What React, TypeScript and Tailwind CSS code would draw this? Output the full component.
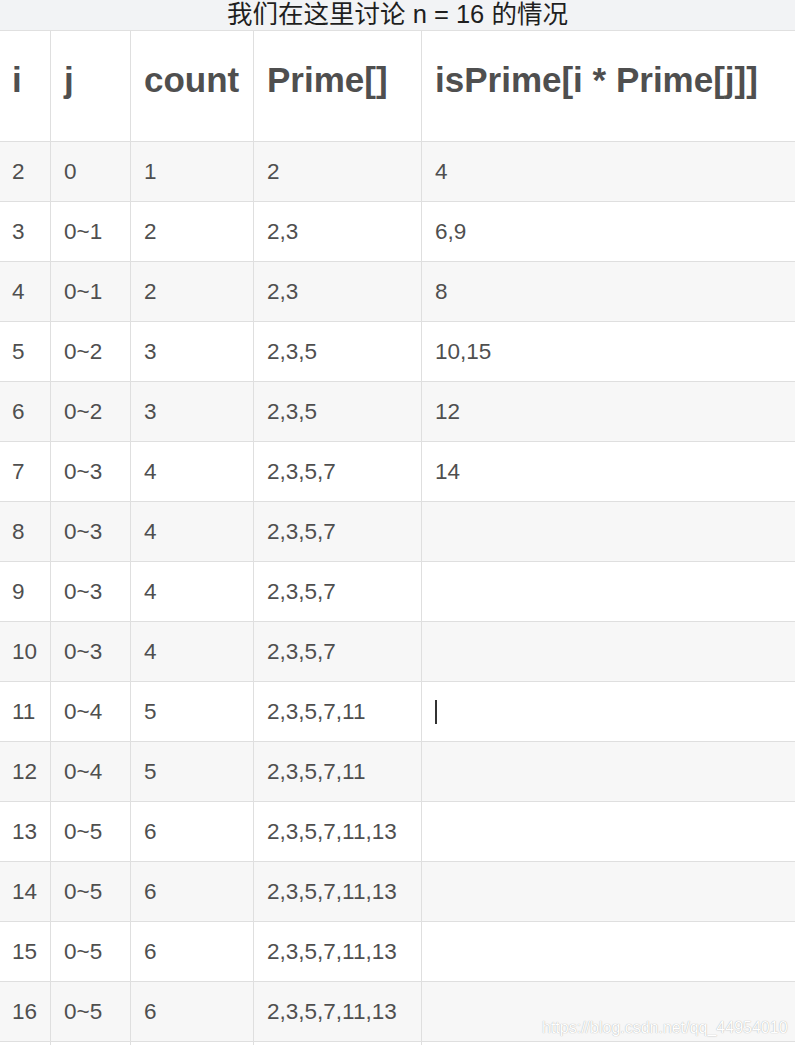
import React from 'react';

const rows: [string, string, string, string, string][] = [
  ['2', '0', '1', '2', '4'],
  ['3', '0~1', '2', '2,3', '6,9'],
  ['4', '0~1', '2', '2,3', '8'],
  ['5', '0~2', '3', '2,3,5', '10,15'],
  ['6', '0~2', '3', '2,3,5', '12'],
  ['7', '0~3', '4', '2,3,5,7', '14'],
  ['8', '0~3', '4', '2,3,5,7', ''],
  ['9', '0~3', '4', '2,3,5,7', ''],
  ['10', '0~3', '4', '2,3,5,7', ''],
  ['11', '0~4', '5', '2,3,5,7,11', ''],
  ['12', '0~4', '5', '2,3,5,7,11', ''],
  ['13', '0~5', '6', '2,3,5,7,11,13', ''],
  ['14', '0~5', '6', '2,3,5,7,11,13', ''],
  ['15', '0~5', '6', '2,3,5,7,11,13', ''],
  ['16', '0~5', '6', '2,3,5,7,11,13', ''],
  ['', '', '', '', ''],
];

const COLS = 'grid grid-cols-[51px_80px_123px_168px_1fr]';
const FIRST = 'flex items-center pl-3 border-r border-[#dfdfdf]';
const CELL = 'flex items-center pl-[13px] border-r border-[#dfdfdf]';

export default function App() {
  return (
    <div
      className="relative w-[795px] h-[1045px] bg-white text-[#4f4f4f] overflow-hidden"
      style={{ fontFamily: '"Liberation Sans", Arial, "Noto Sans CJK SC", sans-serif' }}
    >
      {/* caption */}
      <div className="h-[31px] bg-[#f2f3f5] border-b border-[#e0e0e0] flex items-center justify-center text-[25.5px] leading-none text-[#1f1f1f]">
        我们在这里讨论 n = 16 的情况
      </div>

      {/* header */}
      <div className={`${COLS} h-[111px] border-b border-[#dfdfdf] text-[35px] font-bold`}>
        <div className={`${FIRST} pb-3`}>i</div>
        <div className={`${CELL} pb-3`}>j</div>
        <div className={`${CELL} pb-3`}>count</div>
        <div className={`${CELL} pb-3`}>Prime[]</div>
        <div className="flex items-center pl-[13px] pb-3 whitespace-nowrap">isPrime[i * Prime[j]]</div>
      </div>

      {rows.map((r, idx) => (
        <div
          key={idx}
          className={`${COLS} h-[60px] border-b border-[#dfdfdf] text-[22.5px] ${idx % 2 === 0 ? 'bg-[#f7f7f7]' : 'bg-white'}`}
        >
          <div className={FIRST}>{r[0]}</div>
          <div className={CELL}>{r[1]}</div>
          <div className={CELL}>{r[2]}</div>
          <div className={CELL}>{r[3]}</div>
          <div className="flex items-center pl-[13px]">
            {r[0] === '11' ? <span className="w-[2px] h-[24px] bg-[#333]" /> : r[4]}
          </div>
        </div>
      ))}

      <div className="absolute left-[542px] top-[1016px] text-[16px] text-white [text-shadow:0_0_1px_#999] whitespace-nowrap">
        https://blog.csdn.net/qq_44954010
      </div>
    </div>
  );
}
